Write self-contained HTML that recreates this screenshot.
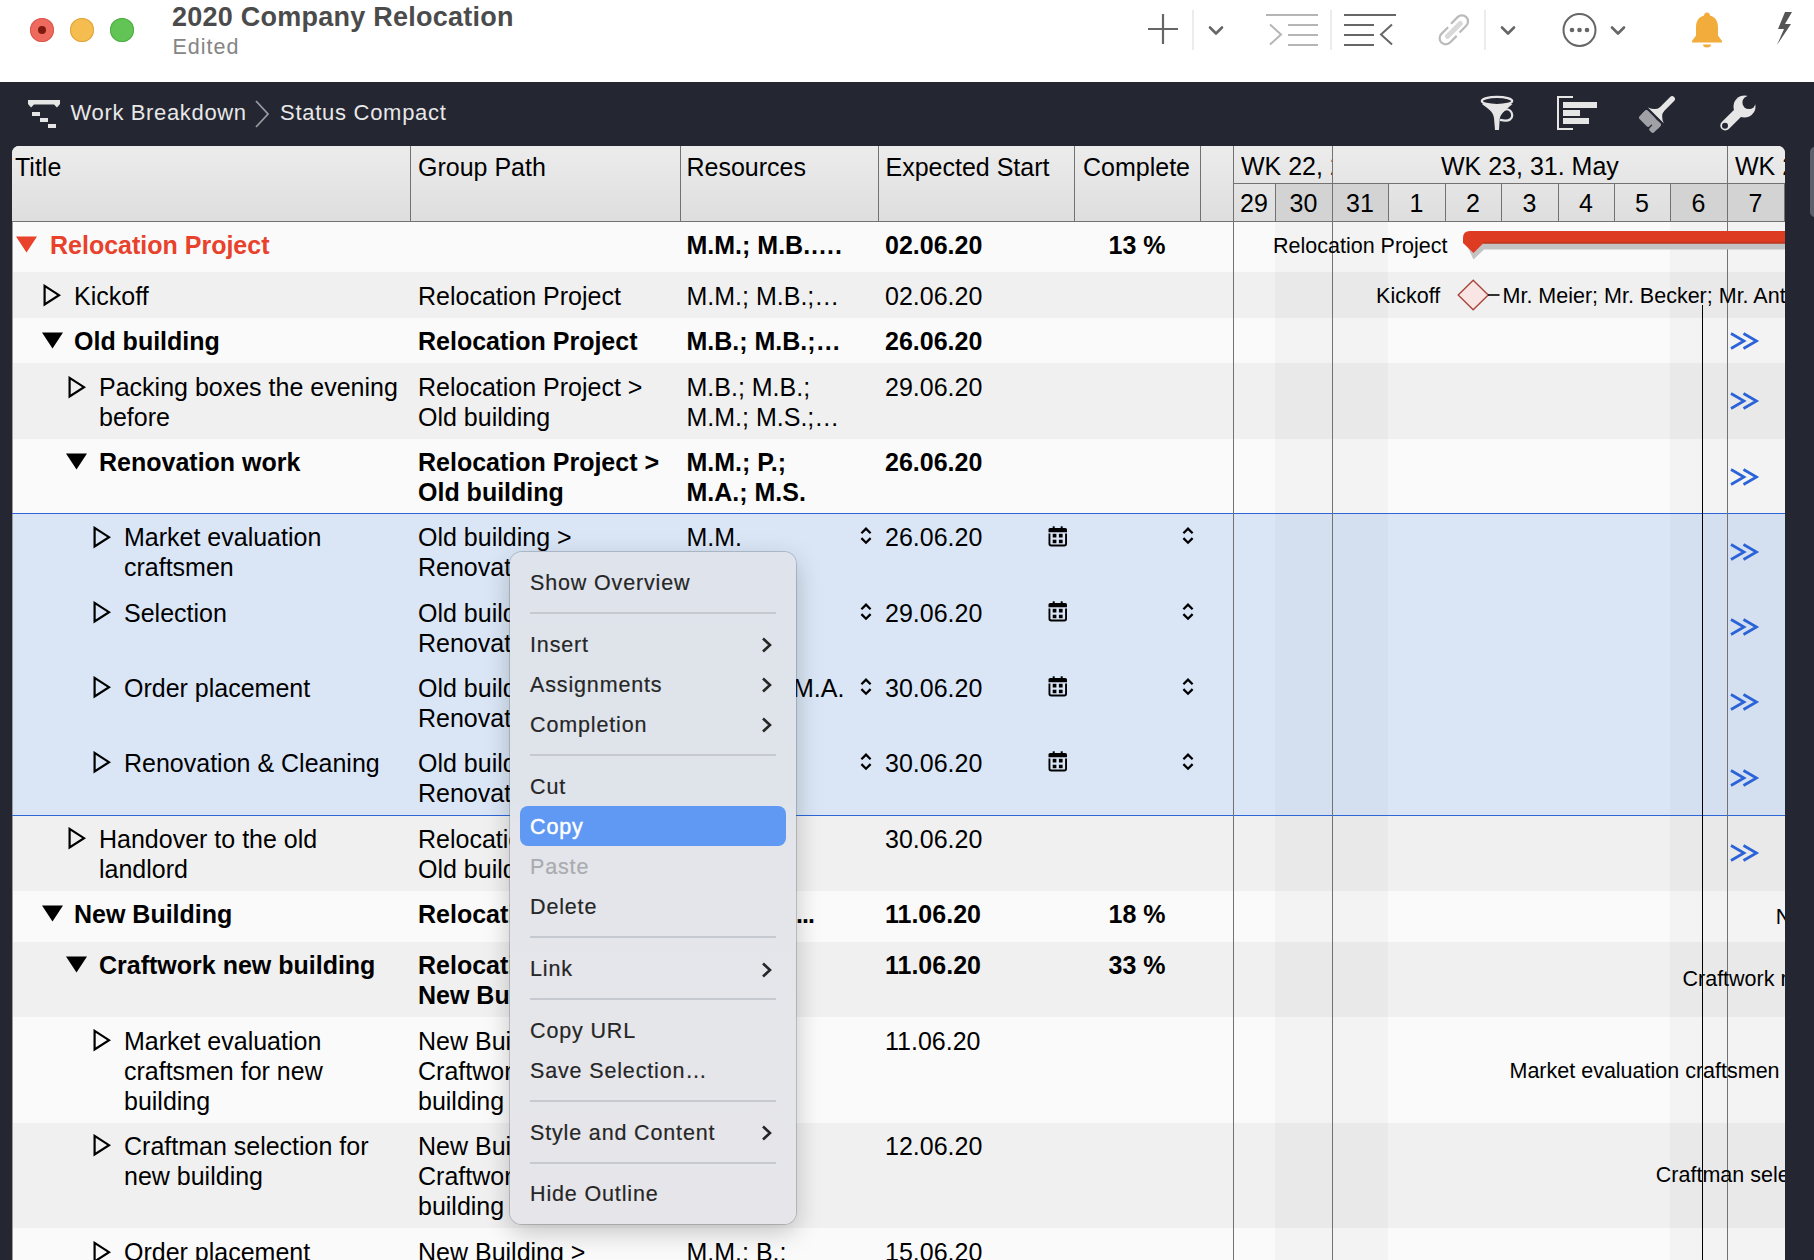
<!DOCTYPE html><html><head><meta charset="utf-8"><style>
html,body{margin:0;padding:0;width:1814px;height:1260px;overflow:hidden;background:#242632}
body{position:relative;font-family:"Liberation Sans",sans-serif}
.t{position:absolute;white-space:nowrap;font-family:"Liberation Sans",sans-serif}
.r{position:absolute}
</style></head><body>
<div class="r" style="left:0px;top:0px;width:1814px;height:82px;background:#ffffff;"></div>
<div class="r" style="left:30px;top:18px;width:24px;height:24px;border-radius:50%;background:#ee6a5f;box-shadow:inset 0 0 0 1px #d9574c"></div>
<div class="r" style="left:38px;top:26px;width:8px;height:8px;border-radius:50%;background:#7e1a10"></div>
<div class="r" style="left:70px;top:18px;width:24px;height:24px;border-radius:50%;background:#f5bd4f;box-shadow:inset 0 0 0 1px #dea43a"></div>
<div class="r" style="left:110px;top:18px;width:24px;height:24px;border-radius:50%;background:#61c454;box-shadow:inset 0 0 0 1px #50ad44"></div>
<div class="t" style="left:172px;top:0.94px;font-size:27px;line-height:32px;font-weight:700;color:#4b4b4b;letter-spacing:0.25px">2020 Company Relocation</div>
<div class="t" style="left:172.5px;top:33.55px;font-size:21.5px;line-height:26px;color:#858585;letter-spacing:1px">Edited</div>
<svg class="r" style="left:0;top:0" width="1814" height="82" viewBox="0 0 1814 82">
<g stroke="#666" stroke-width="2.2" fill="none">
<path d="M1148 29H1178M1163 14V44"/>
</g>
<path d="M1193 10V50M1331 10V50M1485 10V50" stroke="#e6e6e6" stroke-width="1.5"/>
<g stroke="#666" stroke-width="2.6" fill="none" stroke-linecap="round" stroke-linejoin="round">
<path d="M1210 27.5L1216 33.5L1222 27.5"/>
<path d="M1502 27.5L1508 33.5L1514 27.5"/>
<path d="M1612 27.5L1618 33.5L1624 27.5"/>
</g>
<g stroke="#b5b5b5" stroke-width="2" fill="none">
<path d="M1266 15H1318M1288 25H1318M1288 35H1318M1288 45H1318"/>
<path d="M1270 24.5L1281 34.5L1270 44.5"/>
</g>
<g stroke="#666" stroke-width="2" fill="none">
<path d="M1344 15H1396M1344 25H1374M1344 35H1374M1344 45H1374"/>
<path d="M1392 24.5L1381 34.5L1392 44.5"/>
</g>
<g transform="translate(1454.5,30) rotate(-45)">
<rect x="-12" y="-3" width="23.2" height="5" rx="2.5" fill="#d9d9d9"/>
<path d="M2.0 -6.9H11.3A6.1 6.1 0 0 1 11.3 5.3H1.8M-2.6 5.7H-12A6.1 6.1 0 0 1 -12 -6.5H-2.5" fill="none" stroke="#bababa" stroke-width="2.2"/>
</g>
<circle cx="1579.5" cy="30" r="16" stroke="#666" stroke-width="2" fill="none"/>
<circle cx="1572" cy="30" r="2.3" fill="#666"/><circle cx="1579.5" cy="30" r="2.3" fill="#666"/><circle cx="1587" cy="30" r="2.3" fill="#666"/>
<path d="M1707 12.5c-2 0-3 1.5-3 3c-5.5 1.5-8 6-8 12v8l-4 5.5v1.5h30v-1.5l-4-5.5v-8c0-6-2.5-10.5-8-12c0-1.5-1-3-3-3z" fill="#f2ac3c"/>
<path d="M1703 44.5h8a4 3 0 0 1-8 0z" fill="#f2ac3c"/>
<path d="M1785 12L1778 29H1784L1777 45L1791 24H1785L1792 12Z" fill="#555"/>
</svg>
<div class="r" style="left:0px;top:82px;width:1814px;height:1178px;background:#242632;"></div>
<svg class="r" style="left:0;top:82px" width="1814" height="65" viewBox="0 82 1814 65">
<path d="M28 100H60V104L57 107.5L54 104.5H34L31 107.5L28 104Z" fill="#e6e6e6"/>
<rect x="32" y="112" width="8" height="4" fill="#e6e6e6"/>
<rect x="40" y="118" width="8" height="4" fill="#e6e6e6"/>
<rect x="48" y="124" width="8" height="4" fill="#e6e6e6"/>
<path d="M256 101L268 114L256 127" stroke="#9a9ba0" stroke-width="1.8" fill="none"/>
<!-- funnel -->
<path d="M1482 104C1488 109 1493 111 1494 118L1495 130H1499L1499.7 119C1500.5 113 1506 110 1512.5 104Z" fill="#e6e6e6"/>
<ellipse cx="1497" cy="101" rx="15.2" ry="4.1" fill="#242632" stroke="#e6e6e6" stroke-width="2.2"/>
<path d="M1500 114C1502 109.5 1507 108 1510 110.5C1513 113 1513 117.5 1510 119.5C1507 121.5 1503 120.5 1500 119.8" fill="none" stroke="#e6e6e6" stroke-width="2.2"/>
<!-- gantt icon -->
<path d="M1573 97H1558V129H1573" stroke="#e6e6e6" stroke-width="2" fill="none"/>
<rect x="1563" y="102" width="34" height="6" fill="#e6e6e6"/>
<rect x="1563" y="110" width="17" height="6" fill="#e6e6e6"/>
<rect x="1563" y="118" width="26" height="6" fill="#e6e6e6"/>
<!-- brush -->
<g transform="translate(1655,116.2) rotate(135)">
<rect x="-27" y="-2.8" width="20" height="5.6" rx="2.8" fill="#e6e6e6"/>
<path d="M-10 -2.8Q-4 -3.5 -1.2 -11.2L-1.2 11.2Q-4 3.5 -10 2.8Z" fill="#e6e6e6"/>
<rect x="1.3" y="-10.8" width="7" height="21.7" rx="1.5" fill="#a0a1a6"/><rect x="1.3" y="-3.3" width="11.7" height="14.2" rx="2" fill="#a0a1a6"/>
<rect x="1.3" y="-10.8" width="12.7" height="6.2" rx="2" fill="#a0a1a6"/>
</g>
<!-- wrench -->
<mask id="wm" maskUnits="userSpaceOnUse" x="1700" y="85" width="80" height="60"><rect x="1700" y="85" width="80" height="60" fill="#fff"/>
<circle cx="1749" cy="102.5" r="6.6" fill="#000"/>
<path d="M1749 102.5L1762 89.5" stroke="#000" stroke-width="11.2"/>
<circle cx="1725" cy="125.8" r="3" fill="#000"/></mask>
<g mask="url(#wm)" fill="#e6e6e6">
<path d="M1725.3 125.5L1744 107" stroke="#e6e6e6" stroke-width="10" stroke-linecap="round"/>
<circle cx="1744.5" cy="106.5" r="11"/>
</g>
</svg>
<div class="t" style="left:70.5px;top:99.87px;font-size:22px;line-height:26px;color:#e8e8e8;letter-spacing:0.65px">Work Breakdown</div>
<div class="t" style="left:280px;top:99.87px;font-size:22px;line-height:26px;color:#e8e8e8;letter-spacing:0.72px">Status Compact</div>
<div class="r" style="left:1810px;top:147px;width:10px;height:70px;border-radius:5px;background:#5e616b"></div>
<div class="r" id="panel" style="left:12px;top:146px;width:1773px;height:1114px;background:#fafafa;border-radius:7px 7px 0 0;overflow:hidden">
<div class="r" style="left:-12px;top:-146px;width:1814px;height:1260px">
<div class="r" style="left:12px;top:146px;width:1773px;height:75px;background:linear-gradient(#ececec,#dedede);"></div>
<div class="r" style="left:12px;top:221px;width:1773px;height:1px;background:#727272;"></div>
<div class="r" style="left:410px;top:146px;width:1px;height:75px;background:#727272;"></div>
<div class="r" style="left:680px;top:146px;width:1px;height:75px;background:#727272;"></div>
<div class="r" style="left:878px;top:146px;width:1px;height:75px;background:#727272;"></div>
<div class="r" style="left:1074px;top:146px;width:1px;height:75px;background:#727272;"></div>
<div class="r" style="left:1200px;top:146px;width:1px;height:75px;background:#727272;"></div>
<div class="r" style="left:1233px;top:146px;width:1px;height:75px;background:#727272;"></div>
<div class="t" style="left:15px;top:152.33px;font-size:25px;line-height:30px;color:#000;">Title</div>
<div class="t" style="left:418px;top:152.33px;font-size:25px;line-height:30px;color:#000;">Group Path</div>
<div class="t" style="left:686.5px;top:152.33px;font-size:25px;line-height:30px;color:#000;">Resources</div>
<div class="t" style="left:885.5px;top:152.33px;font-size:25px;line-height:30px;color:#000;">Expected Start</div>
<div class="t" style="left:1083px;top:152.33px;font-size:25px;line-height:30px;color:#000;">Complete</div>
<div class="r" style="left:1275px;top:183px;width:57px;height:38px;background:#d3d3d3;"></div>
<div class="r" style="left:1332px;top:183px;width:56px;height:38px;background:#d3d3d3;"></div>
<div class="r" style="left:1670px;top:183px;width:57px;height:38px;background:#d3d3d3;"></div>
<div class="r" style="left:1727px;top:183px;width:57px;height:38px;background:#d3d3d3;"></div>
<div class="r" style="left:1233px;top:183px;width:552px;height:1px;background:#727272;"></div>
<div class="r" style="left:1275px;top:183px;width:1px;height:38px;background:#727272;"></div>
<div class="r" style="left:1332px;top:183px;width:1px;height:38px;background:#727272;"></div>
<div class="r" style="left:1388px;top:183px;width:1px;height:38px;background:#727272;"></div>
<div class="r" style="left:1445px;top:183px;width:1px;height:38px;background:#727272;"></div>
<div class="r" style="left:1501px;top:183px;width:1px;height:38px;background:#727272;"></div>
<div class="r" style="left:1558px;top:183px;width:1px;height:38px;background:#727272;"></div>
<div class="r" style="left:1614px;top:183px;width:1px;height:38px;background:#727272;"></div>
<div class="r" style="left:1670px;top:183px;width:1px;height:38px;background:#727272;"></div>
<div class="r" style="left:1727px;top:183px;width:1px;height:38px;background:#727272;"></div>
<div class="r" style="left:1784px;top:183px;width:1px;height:38px;background:#727272;"></div>
<div class="r" style="left:1332px;top:146px;width:1px;height:37px;background:#727272;"></div>
<div class="r" style="left:1727px;top:146px;width:1px;height:37px;background:#727272;"></div>
<div class="t" style="left:1241px;top:151.33px;font-size:25px;line-height:30px;color:#000;clip-path:inset(0 calc(100% - 91px) 0 0)">WK 22, 2</div>
<div class="t" style="left:1441px;top:151.33px;font-size:25px;line-height:30px;color:#000;">WK 23, 31. May</div>
<div class="t" style="left:1735px;top:151.33px;font-size:25px;line-height:30px;color:#000;">WK 2</div>
<div class="t" style="left:1233px;width:42px;text-align:center;top:188.33px;font-size:25px;line-height:30px">29</div>
<div class="t" style="left:1275px;width:57px;text-align:center;top:188.33px;font-size:25px;line-height:30px">30</div>
<div class="t" style="left:1332px;width:56px;text-align:center;top:188.33px;font-size:25px;line-height:30px">31</div>
<div class="t" style="left:1388px;width:57px;text-align:center;top:188.33px;font-size:25px;line-height:30px">1</div>
<div class="t" style="left:1445px;width:56px;text-align:center;top:188.33px;font-size:25px;line-height:30px">2</div>
<div class="t" style="left:1501px;width:57px;text-align:center;top:188.33px;font-size:25px;line-height:30px">3</div>
<div class="t" style="left:1558px;width:56px;text-align:center;top:188.33px;font-size:25px;line-height:30px">4</div>
<div class="t" style="left:1614px;width:56px;text-align:center;top:188.33px;font-size:25px;line-height:30px">5</div>
<div class="t" style="left:1670px;width:57px;text-align:center;top:188.33px;font-size:25px;line-height:30px">6</div>
<div class="t" style="left:1727px;width:57px;text-align:center;top:188.33px;font-size:25px;line-height:30px">7</div>
<div class="r" style="left:12px;top:222px;width:1773px;height:50px;background:#fafafa;"></div>
<div class="r" style="left:12px;top:272px;width:1773px;height:46px;background:#f0f0f0;"></div>
<div class="r" style="left:12px;top:318px;width:1773px;height:45px;background:#fafafa;"></div>
<div class="r" style="left:12px;top:363px;width:1773px;height:76px;background:#f0f0f0;"></div>
<div class="r" style="left:12px;top:439px;width:1773px;height:75px;background:#fafafa;"></div>
<div class="r" style="left:12px;top:514px;width:1773px;height:75px;background:#dae6f6;"></div>
<div class="r" style="left:12px;top:589px;width:1773px;height:75px;background:#dae6f6;"></div>
<div class="r" style="left:12px;top:664px;width:1773px;height:76px;background:#dae6f6;"></div>
<div class="r" style="left:12px;top:740px;width:1773px;height:75px;background:#dae6f6;"></div>
<div class="r" style="left:12px;top:815px;width:1773px;height:76px;background:#f0f0f0;"></div>
<div class="r" style="left:12px;top:891px;width:1773px;height:51px;background:#fafafa;"></div>
<div class="r" style="left:12px;top:942px;width:1773px;height:75px;background:#f0f0f0;"></div>
<div class="r" style="left:12px;top:1017px;width:1773px;height:106px;background:#fafafa;"></div>
<div class="r" style="left:12px;top:1123px;width:1773px;height:105px;background:#f0f0f0;"></div>
<div class="r" style="left:12px;top:1228px;width:1773px;height:72px;background:#fafafa;"></div>
<div class="r" style="left:12px;top:222px;width:1px;height:1038px;background:#9c9c9c;"></div>
<div class="r" style="left:1275px;top:222px;width:113px;height:1038px;background:rgba(0,0,0,0.028);"></div>
<div class="r" style="left:1670px;top:222px;width:115px;height:1038px;background:rgba(0,0,0,0.028);"></div>
<div class="r" style="left:12px;top:512.9px;width:1773px;height:1.3px;background:#2d66d9;"></div>
<div class="r" style="left:12px;top:814.9px;width:1773px;height:1.1px;background:#2d66d9;"></div>
<div class="r" style="left:1233px;top:222px;width:1px;height:1038px;background:#727272;"></div>
<div class="r" style="left:1332px;top:222px;width:1px;height:1038px;background:#727272;"></div>
<div class="r" style="left:1727px;top:222px;width:1px;height:1038px;background:#727272;"></div>
<div class="r" style="left:1702px;top:305px;width:1.2px;height:955px;background:#000;"></div>
<svg class="r" style="left:16px;top:235.7px" width="21" height="17" viewBox="0 0 21 17"><path d="M0 0.5H21L10.5 16.5Z" fill="#e8412c"/></svg>
<div class="t" style="left:50px;top:229.83px;font-size:25px;line-height:30px;font-weight:700;color:#e8412c;">Relocation Project</div>
<svg class="r" style="left:42.6px;top:284.3px" width="20" height="24" viewBox="0 0 20 24"><path d="M1.6 1.9L16 11.2L1.6 20.5Z" fill="none" stroke="#000" stroke-width="2.2" stroke-linejoin="miter" stroke-miterlimit="10"/></svg>
<div class="t" style="left:74px;top:280.73px;font-size:25px;line-height:30px;color:#000;">Kickoff</div>
<svg class="r" style="left:42px;top:331.6px" width="21" height="17" viewBox="0 0 21 17"><path d="M0 0.5H21L10.5 16.5Z" fill="#000"/></svg>
<div class="t" style="left:74px;top:325.73px;font-size:25px;line-height:30px;font-weight:700;color:#000;">Old building</div>
<svg class="r" style="left:67.6px;top:375.6px" width="20" height="24" viewBox="0 0 20 24"><path d="M1.6 1.9L16 11.2L1.6 20.5Z" fill="none" stroke="#000" stroke-width="2.2" stroke-linejoin="miter" stroke-miterlimit="10"/></svg>
<div class="t" style="left:99px;top:372.03px;font-size:25px;line-height:30px;color:#000;">Packing boxes the evening<br>before</div>
<svg class="r" style="left:66px;top:452.6px" width="21" height="17" viewBox="0 0 21 17"><path d="M0 0.5H21L10.5 16.5Z" fill="#000"/></svg>
<div class="t" style="left:99px;top:446.73px;font-size:25px;line-height:30px;font-weight:700;color:#000;">Renovation work</div>
<svg class="r" style="left:92.5px;top:525.7px" width="20" height="24" viewBox="0 0 20 24"><path d="M1.6 1.9L16 11.2L1.6 20.5Z" fill="none" stroke="#000" stroke-width="2.2" stroke-linejoin="miter" stroke-miterlimit="10"/></svg>
<div class="t" style="left:124px;top:522.13px;font-size:25px;line-height:30px;color:#000;">Market evaluation<br>craftsmen</div>
<svg class="r" style="left:92.5px;top:601.2px" width="20" height="24" viewBox="0 0 20 24"><path d="M1.6 1.9L16 11.2L1.6 20.5Z" fill="none" stroke="#000" stroke-width="2.2" stroke-linejoin="miter" stroke-miterlimit="10"/></svg>
<div class="t" style="left:124px;top:597.63px;font-size:25px;line-height:30px;color:#000;">Selection</div>
<svg class="r" style="left:92.5px;top:676.2px" width="20" height="24" viewBox="0 0 20 24"><path d="M1.6 1.9L16 11.2L1.6 20.5Z" fill="none" stroke="#000" stroke-width="2.2" stroke-linejoin="miter" stroke-miterlimit="10"/></svg>
<div class="t" style="left:124px;top:672.63px;font-size:25px;line-height:30px;color:#000;">Order placement</div>
<svg class="r" style="left:92.5px;top:751.3px" width="20" height="24" viewBox="0 0 20 24"><path d="M1.6 1.9L16 11.2L1.6 20.5Z" fill="none" stroke="#000" stroke-width="2.2" stroke-linejoin="miter" stroke-miterlimit="10"/></svg>
<div class="t" style="left:124px;top:747.73px;font-size:25px;line-height:30px;color:#000;">Renovation &amp; Cleaning</div>
<svg class="r" style="left:67.6px;top:827.4px" width="20" height="24" viewBox="0 0 20 24"><path d="M1.6 1.9L16 11.2L1.6 20.5Z" fill="none" stroke="#000" stroke-width="2.2" stroke-linejoin="miter" stroke-miterlimit="10"/></svg>
<div class="t" style="left:99px;top:823.83px;font-size:25px;line-height:30px;color:#000;">Handover to the old<br>landlord</div>
<svg class="r" style="left:42px;top:905.0000000000001px" width="21" height="17" viewBox="0 0 21 17"><path d="M0 0.5H21L10.5 16.5Z" fill="#000"/></svg>
<div class="t" style="left:74px;top:899.13px;font-size:25px;line-height:30px;font-weight:700;color:#000;">New Building</div>
<svg class="r" style="left:66px;top:956.0000000000001px" width="21" height="17" viewBox="0 0 21 17"><path d="M0 0.5H21L10.5 16.5Z" fill="#000"/></svg>
<div class="t" style="left:99px;top:950.13px;font-size:25px;line-height:30px;font-weight:700;color:#000;">Craftwork new building</div>
<svg class="r" style="left:92.5px;top:1029.3px" width="20" height="24" viewBox="0 0 20 24"><path d="M1.6 1.9L16 11.2L1.6 20.5Z" fill="none" stroke="#000" stroke-width="2.2" stroke-linejoin="miter" stroke-miterlimit="10"/></svg>
<div class="t" style="left:124px;top:1025.73px;font-size:25px;line-height:30px;color:#000;">Market evaluation<br>craftsmen for new<br>building</div>
<svg class="r" style="left:92.5px;top:1134.4px" width="20" height="24" viewBox="0 0 20 24"><path d="M1.6 1.9L16 11.2L1.6 20.5Z" fill="none" stroke="#000" stroke-width="2.2" stroke-linejoin="miter" stroke-miterlimit="10"/></svg>
<div class="t" style="left:124px;top:1130.83px;font-size:25px;line-height:30px;color:#000;">Craftman selection for<br>new building</div>
<svg class="r" style="left:92.5px;top:1241.0px" width="20" height="24" viewBox="0 0 20 24"><path d="M1.6 1.9L16 11.2L1.6 20.5Z" fill="none" stroke="#000" stroke-width="2.2" stroke-linejoin="miter" stroke-miterlimit="10"/></svg>
<div class="t" style="left:124px;top:1237.43px;font-size:25px;line-height:30px;color:#000;">Order placement</div>
<div class="t" style="left:418px;top:280.73px;font-size:25px;line-height:30px;color:#000;">Relocation Project</div>
<div class="t" style="left:418px;top:325.73px;font-size:25px;line-height:30px;font-weight:700;color:#000;">Relocation Project</div>
<div class="t" style="left:418px;top:372.03px;font-size:25px;line-height:30px;color:#000;">Relocation Project &gt;<br>Old building</div>
<div class="t" style="left:418px;top:446.73px;font-size:25px;line-height:30px;font-weight:700;color:#000;">Relocation Project &gt;<br>Old building</div>
<div class="t" style="left:418px;top:522.13px;font-size:25px;line-height:30px;color:#000;">Old building &gt;<br>Renovation work</div>
<div class="t" style="left:418px;top:597.63px;font-size:25px;line-height:30px;color:#000;">Old building &gt;<br>Renovation work</div>
<div class="t" style="left:418px;top:672.63px;font-size:25px;line-height:30px;color:#000;">Old building &gt;<br>Renovation work</div>
<div class="t" style="left:418px;top:747.73px;font-size:25px;line-height:30px;color:#000;">Old building &gt;<br>Renovation work</div>
<div class="t" style="left:418px;top:823.83px;font-size:25px;line-height:30px;color:#000;">Relocation Project &gt;<br>Old building</div>
<div class="t" style="left:418px;top:899.13px;font-size:25px;line-height:30px;font-weight:700;color:#000;">Relocation Project</div>
<div class="t" style="left:418px;top:950.13px;font-size:25px;line-height:30px;font-weight:700;color:#000;">Relocation Project &gt;<br>New Building</div>
<div class="t" style="left:418px;top:1025.73px;font-size:25px;line-height:30px;color:#000;">New Building &gt;<br>Craftwork new<br>building</div>
<div class="t" style="left:418px;top:1130.83px;font-size:25px;line-height:30px;color:#000;">New Building &gt;<br>Craftwork new<br>building</div>
<div class="t" style="left:418px;top:1237.43px;font-size:25px;line-height:30px;color:#000;">New Building &gt;</div>
<div class="t" style="left:686.5px;top:229.83px;font-size:25px;line-height:30px;font-weight:700;color:#000;">M.M.; M.B.….</div>
<div class="t" style="left:686.5px;top:280.73px;font-size:25px;line-height:30px;color:#000;">M.M.; M.B.;…</div>
<div class="t" style="left:686.5px;top:325.73px;font-size:25px;line-height:30px;font-weight:700;color:#000;">M.B.; M.B.;…</div>
<div class="t" style="left:686.5px;top:372.03px;font-size:25px;line-height:30px;color:#000;">M.B.; M.B.;<br>M.M.; M.S.;…</div>
<div class="t" style="left:686.5px;top:446.73px;font-size:25px;line-height:30px;font-weight:700;color:#000;">M.M.; P.;<br>M.A.; M.S.</div>
<div class="t" style="left:686.5px;top:522.13px;font-size:25px;line-height:30px;color:#000;">M.M.</div>
<div class="t" style="left:793px;top:672.63px;font-size:25px;line-height:30px;color:#000;">M.A.</div>
<div class="t" style="left:796px;top:899.13px;font-size:25px;line-height:30px;font-weight:700;color:#000;letter-spacing:-1px">...</div>
<div class="t" style="left:686.5px;top:1237.43px;font-size:25px;line-height:30px;color:#000;">M.M.; B.;</div>
<div class="t" style="left:885px;top:229.83px;font-size:25px;line-height:30px;font-weight:700;color:#000;">02.06.20</div>
<div class="t" style="left:885px;top:280.73px;font-size:25px;line-height:30px;color:#000;">02.06.20</div>
<div class="t" style="left:885px;top:325.73px;font-size:25px;line-height:30px;font-weight:700;color:#000;">26.06.20</div>
<div class="t" style="left:885px;top:372.03px;font-size:25px;line-height:30px;color:#000;">29.06.20</div>
<div class="t" style="left:885px;top:446.73px;font-size:25px;line-height:30px;font-weight:700;color:#000;">26.06.20</div>
<div class="t" style="left:885px;top:522.13px;font-size:25px;line-height:30px;color:#000;">26.06.20</div>
<div class="t" style="left:885px;top:597.63px;font-size:25px;line-height:30px;color:#000;">29.06.20</div>
<div class="t" style="left:885px;top:672.63px;font-size:25px;line-height:30px;color:#000;">30.06.20</div>
<div class="t" style="left:885px;top:747.73px;font-size:25px;line-height:30px;color:#000;">30.06.20</div>
<div class="t" style="left:885px;top:823.83px;font-size:25px;line-height:30px;color:#000;">30.06.20</div>
<div class="t" style="left:885px;top:899.13px;font-size:25px;line-height:30px;font-weight:700;color:#000;">11.06.20</div>
<div class="t" style="left:885px;top:950.13px;font-size:25px;line-height:30px;font-weight:700;color:#000;">11.06.20</div>
<div class="t" style="left:885px;top:1025.73px;font-size:25px;line-height:30px;color:#000;">11.06.20</div>
<div class="t" style="left:885px;top:1130.83px;font-size:25px;line-height:30px;color:#000;">12.06.20</div>
<div class="t" style="left:885px;top:1237.43px;font-size:25px;line-height:30px;color:#000;">15.06.20</div>
<div class="t" style="left:1074px;width:126px;text-align:center;top:229.83px;font-size:25px;line-height:30px;font-weight:700">13 %</div>
<div class="t" style="left:1074px;width:126px;text-align:center;top:899.13px;font-size:25px;line-height:30px;font-weight:700">18 %</div>
<div class="t" style="left:1074px;width:126px;text-align:center;top:950.13px;font-size:25px;line-height:30px;font-weight:700">33 %</div>
<svg class="r" style="left:859.2px;top:526.2px" width="14" height="19" viewBox="0 0 14 19"><path d="M2.4 7.3L7 2.7L11.6 7.3M2.4 12.1L7 16.7L11.6 12.1" fill="none" stroke="#000" stroke-width="2.3"/></svg>
<svg class="r" style="left:1048px;top:525.7px" width="20" height="22" viewBox="0 0 20 22"><path d="M0.5 6.3V3.6Q0.5 2 2.1 2H17.4Q19 2 19 3.6V6.3Z" fill="#000"/><rect x="4.7" y="0.3" width="2" height="2.5" fill="#000"/><rect x="12.7" y="0.3" width="2" height="2.5" fill="#000"/><path d="M1.45 7.5V17.8Q1.45 19.55 3.2 19.55H16.3Q18.05 19.55 18.05 17.8V7.5" fill="none" stroke="#000" stroke-width="1.9"/><rect x="4.7" y="7.8" width="3.7" height="3.7" fill="#000"/><rect x="10.9" y="7.8" width="3.7" height="3.7" fill="#000"/><rect x="4.7" y="13.7" width="3.7" height="3.5" fill="#000"/><rect x="10.9" y="13.7" width="3.7" height="3.5" fill="#000"/></svg>
<svg class="r" style="left:1180.5px;top:526.2px" width="14" height="19" viewBox="0 0 14 19"><path d="M2.4 7.3L7 2.7L11.6 7.3M2.4 12.1L7 16.7L11.6 12.1" fill="none" stroke="#000" stroke-width="2.3"/></svg>
<svg class="r" style="left:859.2px;top:601.7px" width="14" height="19" viewBox="0 0 14 19"><path d="M2.4 7.3L7 2.7L11.6 7.3M2.4 12.1L7 16.7L11.6 12.1" fill="none" stroke="#000" stroke-width="2.3"/></svg>
<svg class="r" style="left:1048px;top:601.2px" width="20" height="22" viewBox="0 0 20 22"><path d="M0.5 6.3V3.6Q0.5 2 2.1 2H17.4Q19 2 19 3.6V6.3Z" fill="#000"/><rect x="4.7" y="0.3" width="2" height="2.5" fill="#000"/><rect x="12.7" y="0.3" width="2" height="2.5" fill="#000"/><path d="M1.45 7.5V17.8Q1.45 19.55 3.2 19.55H16.3Q18.05 19.55 18.05 17.8V7.5" fill="none" stroke="#000" stroke-width="1.9"/><rect x="4.7" y="7.8" width="3.7" height="3.7" fill="#000"/><rect x="10.9" y="7.8" width="3.7" height="3.7" fill="#000"/><rect x="4.7" y="13.7" width="3.7" height="3.5" fill="#000"/><rect x="10.9" y="13.7" width="3.7" height="3.5" fill="#000"/></svg>
<svg class="r" style="left:1180.5px;top:601.7px" width="14" height="19" viewBox="0 0 14 19"><path d="M2.4 7.3L7 2.7L11.6 7.3M2.4 12.1L7 16.7L11.6 12.1" fill="none" stroke="#000" stroke-width="2.3"/></svg>
<svg class="r" style="left:859.2px;top:676.7px" width="14" height="19" viewBox="0 0 14 19"><path d="M2.4 7.3L7 2.7L11.6 7.3M2.4 12.1L7 16.7L11.6 12.1" fill="none" stroke="#000" stroke-width="2.3"/></svg>
<svg class="r" style="left:1048px;top:676.2px" width="20" height="22" viewBox="0 0 20 22"><path d="M0.5 6.3V3.6Q0.5 2 2.1 2H17.4Q19 2 19 3.6V6.3Z" fill="#000"/><rect x="4.7" y="0.3" width="2" height="2.5" fill="#000"/><rect x="12.7" y="0.3" width="2" height="2.5" fill="#000"/><path d="M1.45 7.5V17.8Q1.45 19.55 3.2 19.55H16.3Q18.05 19.55 18.05 17.8V7.5" fill="none" stroke="#000" stroke-width="1.9"/><rect x="4.7" y="7.8" width="3.7" height="3.7" fill="#000"/><rect x="10.9" y="7.8" width="3.7" height="3.7" fill="#000"/><rect x="4.7" y="13.7" width="3.7" height="3.5" fill="#000"/><rect x="10.9" y="13.7" width="3.7" height="3.5" fill="#000"/></svg>
<svg class="r" style="left:1180.5px;top:676.7px" width="14" height="19" viewBox="0 0 14 19"><path d="M2.4 7.3L7 2.7L11.6 7.3M2.4 12.1L7 16.7L11.6 12.1" fill="none" stroke="#000" stroke-width="2.3"/></svg>
<svg class="r" style="left:859.2px;top:751.8px" width="14" height="19" viewBox="0 0 14 19"><path d="M2.4 7.3L7 2.7L11.6 7.3M2.4 12.1L7 16.7L11.6 12.1" fill="none" stroke="#000" stroke-width="2.3"/></svg>
<svg class="r" style="left:1048px;top:751.3px" width="20" height="22" viewBox="0 0 20 22"><path d="M0.5 6.3V3.6Q0.5 2 2.1 2H17.4Q19 2 19 3.6V6.3Z" fill="#000"/><rect x="4.7" y="0.3" width="2" height="2.5" fill="#000"/><rect x="12.7" y="0.3" width="2" height="2.5" fill="#000"/><path d="M1.45 7.5V17.8Q1.45 19.55 3.2 19.55H16.3Q18.05 19.55 18.05 17.8V7.5" fill="none" stroke="#000" stroke-width="1.9"/><rect x="4.7" y="7.8" width="3.7" height="3.7" fill="#000"/><rect x="10.9" y="7.8" width="3.7" height="3.7" fill="#000"/><rect x="4.7" y="13.7" width="3.7" height="3.5" fill="#000"/><rect x="10.9" y="13.7" width="3.7" height="3.5" fill="#000"/></svg>
<svg class="r" style="left:1180.5px;top:751.8px" width="14" height="19" viewBox="0 0 14 19"><path d="M2.4 7.3L7 2.7L11.6 7.3M2.4 12.1L7 16.7L11.6 12.1" fill="none" stroke="#000" stroke-width="2.3"/></svg>
<div class="r" style="left:1233px;top:222px;width:552px;height:1038px;overflow:hidden">
<div class="t" style="left:40.0px;top:11.15px;font-size:21.5px;line-height:26px;color:#000;">Relocation Project</div>
<svg class="r" style="left:230px;top:8px" width="330" height="32" viewBox="1463 230 330 32"><path d="M1463 237L1473.5 259.5L1484 249.5H1800V237Z" fill="#c3c3c3"/><path d="M1463 238Q1463 231 1470 231H1800V243.6H1483L1473.5 253L1463 243Z" fill="#dd3b22"/><path d="M1483 243H1800" stroke="#a9301b" stroke-width="1"/></svg>
<div class="t" style="left:143.0999999999999px;top:60.55px;font-size:21.5px;line-height:26px;color:#000;">Kickoff</div>
<svg class="r" style="left:224px;top:56px" width="60" height="34" viewBox="1457 278 60 34"><path d="M1473.2 280.2L1488.2 295L1473.2 309.8L1458.2 295Z" fill="#f9e6e4" stroke="#a8463a" stroke-width="1.4"/><path d="M1488 295H1499.5" stroke="#000" stroke-width="1.6"/></svg>
<div class="t" style="left:269.5px;top:60.55px;font-size:21.5px;line-height:26px;color:#000;">Mr. Meier; Mr. Becker; Mr. Antonio</div>
<svg class="r" style="left:497px;top:109.5px" width="32" height="18" viewBox="0 0 32 18"><path d="M1 1.5L14 9L1 16.5M13.5 1.5L26.5 9L13.5 16.5" fill="none" stroke="#2a62d8" stroke-width="2.7"/></svg>
<svg class="r" style="left:497px;top:170.0px" width="32" height="18" viewBox="0 0 32 18"><path d="M1 1.5L14 9L1 16.5M13.5 1.5L26.5 9L13.5 16.5" fill="none" stroke="#2a62d8" stroke-width="2.7"/></svg>
<svg class="r" style="left:497px;top:245.5px" width="32" height="18" viewBox="0 0 32 18"><path d="M1 1.5L14 9L1 16.5M13.5 1.5L26.5 9L13.5 16.5" fill="none" stroke="#2a62d8" stroke-width="2.7"/></svg>
<svg class="r" style="left:497px;top:320.5px" width="32" height="18" viewBox="0 0 32 18"><path d="M1 1.5L14 9L1 16.5M13.5 1.5L26.5 9L13.5 16.5" fill="none" stroke="#2a62d8" stroke-width="2.7"/></svg>
<svg class="r" style="left:497px;top:395.5px" width="32" height="18" viewBox="0 0 32 18"><path d="M1 1.5L14 9L1 16.5M13.5 1.5L26.5 9L13.5 16.5" fill="none" stroke="#2a62d8" stroke-width="2.7"/></svg>
<svg class="r" style="left:497px;top:471.0px" width="32" height="18" viewBox="0 0 32 18"><path d="M1 1.5L14 9L1 16.5M13.5 1.5L26.5 9L13.5 16.5" fill="none" stroke="#2a62d8" stroke-width="2.7"/></svg>
<svg class="r" style="left:497px;top:546.5px" width="32" height="18" viewBox="0 0 32 18"><path d="M1 1.5L14 9L1 16.5M13.5 1.5L26.5 9L13.5 16.5" fill="none" stroke="#2a62d8" stroke-width="2.7"/></svg>
<svg class="r" style="left:497px;top:622.0px" width="32" height="18" viewBox="0 0 32 18"><path d="M1 1.5L14 9L1 16.5M13.5 1.5L26.5 9L13.5 16.5" fill="none" stroke="#2a62d8" stroke-width="2.7"/></svg>
<div class="t" style="left:542.8px;top:681.55px;font-size:21.5px;line-height:26px;color:#000;">New Building</div>
<div class="t" style="left:449.5px;top:744.25px;font-size:21.5px;line-height:26px;color:#000;">Craftwork new building</div>
<div class="t" style="left:276.5px;top:835.55px;font-size:21.5px;line-height:26px;color:#000;">Market evaluation craftsmen for new building</div>
<div class="t" style="left:422.79999999999995px;top:940.25px;font-size:21.5px;line-height:26px;color:#000;">Craftman selection for new building</div>
</div>
</div></div>
<div class="r" style="left:510px;top:552px;width:286px;height:672px;border-radius:12px;background:linear-gradient(#dfe4ec 0px,#dfe4eb 250px,#e4e5ea 290px,#e6e6ea 100%);box-shadow:0 0 0 1px rgba(80,90,100,0.28),0 8px 26px rgba(0,0,0,0.22)"></div>
<div class="t" style="left:530px;top:569.85px;font-size:21.5px;line-height:26px;color:#262626;letter-spacing:0.85px;-webkit-text-stroke:0.2px #262626">Show Overview</div>
<div class="r" style="left:530px;top:612px;width:246px;height:2px;background:#c6c9cf;"></div>
<div class="t" style="left:530px;top:631.65px;font-size:21.5px;line-height:26px;color:#262626;letter-spacing:0.85px;-webkit-text-stroke:0.2px #262626">Insert</div>
<svg class="r" style="left:760px;top:637.3px" width="14" height="17" viewBox="0 0 14 17"><path d="M3 1.5L10 8L3 14.5" fill="none" stroke="#262626" stroke-width="2.6"/></svg>
<div class="t" style="left:530px;top:671.75px;font-size:21.5px;line-height:26px;color:#262626;letter-spacing:0.85px;-webkit-text-stroke:0.2px #262626">Assignments</div>
<svg class="r" style="left:760px;top:677.4px" width="14" height="17" viewBox="0 0 14 17"><path d="M3 1.5L10 8L3 14.5" fill="none" stroke="#262626" stroke-width="2.6"/></svg>
<div class="t" style="left:530px;top:711.75px;font-size:21.5px;line-height:26px;color:#262626;letter-spacing:0.85px;-webkit-text-stroke:0.2px #262626">Completion</div>
<svg class="r" style="left:760px;top:717.4px" width="14" height="17" viewBox="0 0 14 17"><path d="M3 1.5L10 8L3 14.5" fill="none" stroke="#262626" stroke-width="2.6"/></svg>
<div class="r" style="left:530px;top:754px;width:246px;height:2px;background:#c6c9cf;"></div>
<div class="t" style="left:530px;top:774.05px;font-size:21.5px;line-height:26px;color:#262626;letter-spacing:0.85px;-webkit-text-stroke:0.2px #262626">Cut</div>
<div class="r" style="left:520px;top:806px;width:266px;height:40px;border-radius:8px;background:#5f99f3"></div>
<div class="t" style="left:530px;top:814.05px;font-size:21.5px;line-height:26px;color:#ffffff;letter-spacing:0.85px;-webkit-text-stroke:0.45px #ffffff">Copy</div>
<div class="t" style="left:530px;top:854.35px;font-size:21.5px;line-height:26px;color:#a9abaf;letter-spacing:0.85px;-webkit-text-stroke:0.2px #a9abaf">Paste</div>
<div class="t" style="left:530px;top:894.05px;font-size:21.5px;line-height:26px;color:#262626;letter-spacing:0.85px;-webkit-text-stroke:0.2px #262626">Delete</div>
<div class="r" style="left:530px;top:936px;width:246px;height:2px;background:#c6c9cf;"></div>
<div class="t" style="left:530px;top:955.85px;font-size:21.5px;line-height:26px;color:#262626;letter-spacing:0.85px;-webkit-text-stroke:0.2px #262626">Link</div>
<svg class="r" style="left:760px;top:961.5px" width="14" height="17" viewBox="0 0 14 17"><path d="M3 1.5L10 8L3 14.5" fill="none" stroke="#262626" stroke-width="2.6"/></svg>
<div class="r" style="left:530px;top:998px;width:246px;height:2px;background:#c6c9cf;"></div>
<div class="t" style="left:530px;top:1017.85px;font-size:21.5px;line-height:26px;color:#262626;letter-spacing:0.85px;-webkit-text-stroke:0.2px #262626">Copy URL</div>
<div class="t" style="left:530px;top:1057.85px;font-size:21.5px;line-height:26px;color:#262626;letter-spacing:0.85px;-webkit-text-stroke:0.2px #262626">Save Selection…</div>
<div class="r" style="left:530px;top:1100px;width:246px;height:2px;background:#c6c9cf;"></div>
<div class="t" style="left:530px;top:1119.65px;font-size:21.5px;line-height:26px;color:#262626;letter-spacing:0.85px;-webkit-text-stroke:0.2px #262626">Style and Content</div>
<svg class="r" style="left:760px;top:1125.3px" width="14" height="17" viewBox="0 0 14 17"><path d="M3 1.5L10 8L3 14.5" fill="none" stroke="#262626" stroke-width="2.6"/></svg>
<div class="r" style="left:530px;top:1162px;width:246px;height:2px;background:#c6c9cf;"></div>
<div class="t" style="left:530px;top:1181.35px;font-size:21.5px;line-height:26px;color:#262626;letter-spacing:0.85px;-webkit-text-stroke:0.2px #262626">Hide Outline</div>
</body></html>
